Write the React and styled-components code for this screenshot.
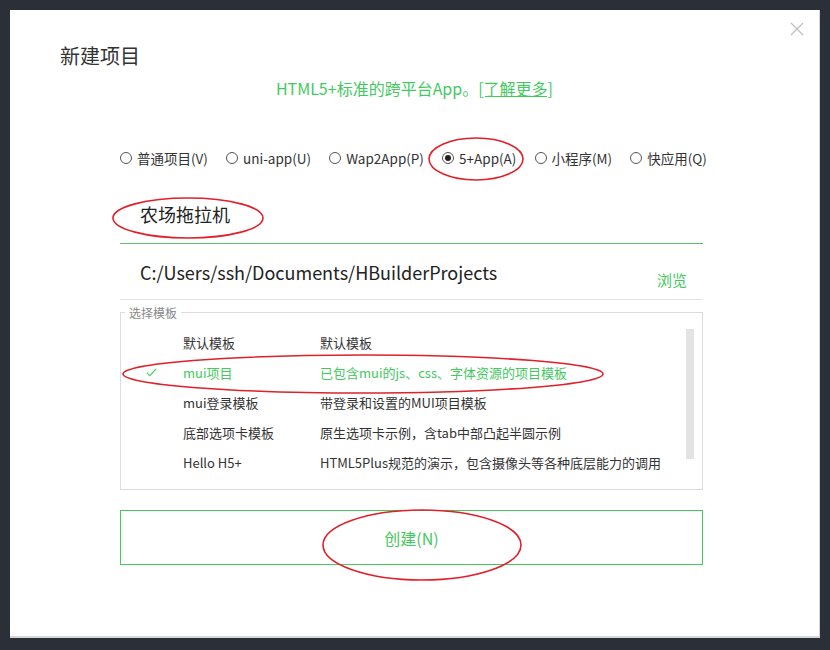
import React from "react";
import styled, { createGlobalStyle } from "styled-components";

const GREEN = "#44c95f";

const Global = createGlobalStyle`
  html, body { margin: 0; padding: 0; background: #2b2f38; }
  body { font-family: "Noto Sans CJK SC", "Noto Sans", sans-serif; }
  * { box-sizing: border-box; }
`;

const Page = styled.div`
  width: 830px;
  height: 650px;
  padding: 10px 10px 12px 10px;
  background: #2b2f38;
`;

const Dialog = styled.div`
  position: relative;
  width: 810px;
  height: 628px;
  background: #fff;
  border-bottom: 2px solid #d6d6d6;
  border-right: 1px solid #d6d6d6;
  display: flex;
  flex-direction: column;
`;

const Close = styled.button`
  position: absolute;
  top: 12px;
  right: 14px;
  width: 16px;
  height: 16px;
  padding: 0;
  border: none;
  background: none;
`;

const Title = styled.h1`
  margin: 33px 0 0 50px;
  font-size: 20px;
  font-weight: 400;
  color: #333;
  line-height: 26px;
`;

const Subtitle = styled.div`
  margin-top: 8px;
  text-align: center;
  font-size: 16px;
  color: ${GREEN};
  line-height: 22px;
  a { color: ${GREEN}; text-decoration: underline; }
`;

const Body = styled.div`
  margin-left: 110px;
  width: 583px;
  display: flex;
  flex-direction: column;
`;

const RadioRow = styled.div`
  margin-top: 49px;
  width: 587px;
  display: flex;
  justify-content: space-between;
  align-items: center;
  height: 20px;
`;

const RadioItem = styled.label`
  display: flex;
  align-items: center;
  gap: 5px;
  font-size: 13.5px;
  color: #333;
  white-space: nowrap;
`;

const Circle = styled.span`
  width: 12px;
  height: 12px;
  border-radius: 50%;
  border: 1px solid #555;
  display: inline-flex;
  align-items: center;
  justify-content: center;
  &::after {
    content: "";
    width: 6px;
    height: 6px;
    border-radius: 50%;
    background: ${(p) => (p.$checked ? "#222" : "transparent")};
  }
`;

const Field = styled.div`
  height: ${(p) => p.$h}px;
  display: flex;
  align-items: center;
  justify-content: space-between;
  padding-left: 20px;
  padding-right: 16px;
  padding-top: ${(p) => p.$pt || 0}px;
  border-bottom: 1px solid ${(p) => p.$line};
  font-size: 18px;
  color: #222;
`;

const Browse = styled.span`
  font-size: 15px;
  color: ${GREEN};
  margin-top: 16px;
`;

const Fieldset = styled.fieldset`
  margin: 4px 0 0 0;
  padding: 6px 0 0 0;
  height: 186px;
  border: 1px solid #dcdcdc;
  position: relative;
  legend {
    margin-left: 4px;
    padding: 0 4px 0 4px;
    font-size: 12px;
    color: #888;
  }
`;

const Scroll = styled.div`
  position: absolute;
  right: 8px;
  top: 8px;
  width: 8px;
  height: 130px;
  background: #e3e3e3;
`;

const Row = styled.div`
  display: grid;
  grid-template-columns: 62px 137px 1fr;
  height: 30px;
  align-items: center;
  font-size: 13px;
  color: ${(p) => (p.$sel ? GREEN : "#333")};
`;

const Check = styled.span`
  display: flex;
  padding-left: 25px;
`;

const CreateButton = styled.button`
  margin-top: 20px;
  height: 55px;
  border: 1px solid ${GREEN};
  background: #fff;
  color: ${GREEN};
  font-family: inherit;
  font-size: 16px;
`;

const Marks = styled.svg`
  position: absolute;
  left: -10px;
  top: -10px;
  pointer-events: none;
`;

const radios = [
  { label: "普通项目(V)" },
  { label: "uni-app(U)" },
  { label: "Wap2App(P)" },
  { label: "5+App(A)", checked: true },
  { label: "小程序(M)" },
  { label: "快应用(Q)" },
];

const rows = [
  ["默认模板", "默认模板"],
  ["mui项目", "已包含mui的js、css、字体资源的项目模板", true],
  ["mui登录模板", "带登录和设置的MUI项目模板"],
  ["底部选项卡模板", "原生选项卡示例，含tab中部凸起半圆示例"],
  ["Hello H5+", "HTML5Plus规范的演示，包含摄像头等各种底层能力的调用"],
];

export default function App() {
  return (
    <Page>
      <Global />
      <Dialog>
        <Close aria-label="close">
          <svg width="14" height="14" viewBox="0 0 14 14">
            <path d="M1 1L13 13M13 1L1 13" stroke="#bdbdbd" strokeWidth="1.2" />
          </svg>
        </Close>
        <Title>新建项目</Title>
        <Subtitle>
          HTML5+标准的跨平台App。<a>[了解更多]</a>
        </Subtitle>
        <Body>
          <RadioRow>
            {radios.map((r) => (
              <RadioItem key={r.label}>
                <Circle $checked={r.checked} />
                {r.label}
              </RadioItem>
            ))}
          </RadioRow>
          <Field $h={76} $pt={16} $line="#5cbf6c">
            农场拖拉机
          </Field>
          <Field $h={56} $line="#e3e3e3">
            <span>C:/Users/ssh/Documents/HBuilderProjects</span>
            <Browse>浏览</Browse>
          </Field>
          <Fieldset>
            <legend>选择模板</legend>
            <Scroll />
            {rows.map(([n, d, sel]) => (
              <Row key={n} $sel={sel}>
                <Check>
                  {sel && (
                    <svg width="11" height="9" viewBox="0 0 11 9">
                      <path d="M0.8 4.6L3.8 7.6L10.2 0.8" fill="none" stroke={GREEN} strokeWidth="1.1" />
                    </svg>
                  )}
                </Check>
                <span>{n}</span>
                <span>{d}</span>
              </Row>
            ))}
          </Fieldset>
          <CreateButton>创建(N)</CreateButton>
        </Body>
        <Marks width="830" height="650" viewBox="0 0 830 650">
          <g fill="none" stroke="#e0202a" strokeWidth="1.6">
            <ellipse cx="476" cy="159" rx="47" ry="21" />
            <ellipse cx="188" cy="218" rx="75" ry="20" />
            <ellipse cx="363" cy="374" rx="240" ry="19" />
            <ellipse cx="422" cy="545" rx="99" ry="35" />
          </g>
        </Marks>
      </Dialog>
    </Page>
  );
}
